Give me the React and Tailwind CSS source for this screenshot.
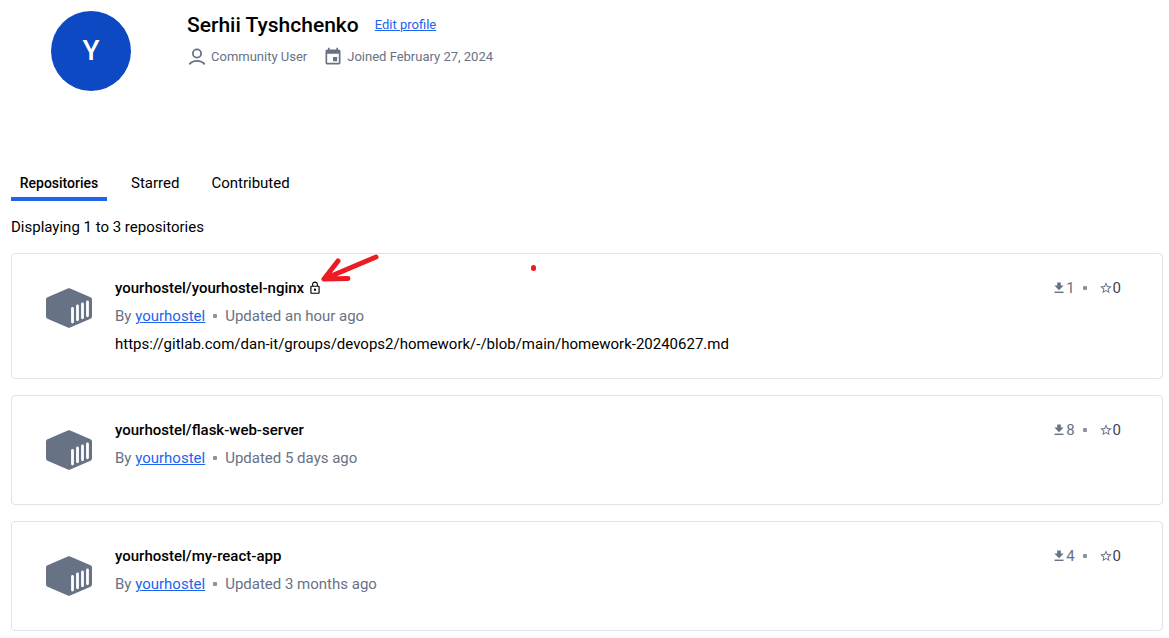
import { MdEvent, MdLockOutline, MdStarBorder } from 'react-icons/md';

const repositories = [
  {
    name: 'yourhostel/yourhostel-nginx',
    updated: 'Updated an hour ago',
    description: 'https://gitlab.com/dan-it/groups/devops2/homework/-/blob/main/homework-20240627.md',
    isPrivate: true,
    pulls: 1,
    stars: 0,
  },
  { name: 'yourhostel/flask-web-server', updated: 'Updated 5 days ago', pulls: 8, stars: 0 },
  { name: 'yourhostel/my-react-app', updated: 'Updated 3 months ago', pulls: 4, stars: 0 },
];

function PersonIcon() {
  return (
    <svg viewBox="0 0 20 20" className="size-5" fill="none" stroke="currentColor" strokeWidth="1.8" aria-hidden="true">
      <circle cx="10" cy="6.5" r="4.1" />
      <path d="M2.3 17.3C4.2 15.1 7 13.9 10 13.9s5.8 1.2 7.7 3.4" />
    </svg>
  );
}

function PullsIcon() {
  return (
    <svg viewBox="0 0 14 14" className="size-[14px]" fill="#677285" role="img" aria-label="Pulls">
      <path d="M5.200 1.500h3.600v3h2.800L7 9.300 2.400 4.500h2.800z" />
      <path d="M2.500 10.600h9v1.400h-9z" />
    </svg>
  );
}

function ContainerIcon() {
  return (
    <svg viewBox="0 0 46 40" className="h-10 w-[46px]" aria-hidden="true">
      <path
        d="M21.8.4a3 3 0 0 1 2.4 0L44.5 9.2A2.4 2.4 0 0 1 46 11.4V28.6a2.4 2.4 0 0 1-1.5 2.2L24.2 39.6a3 3 0 0 1-2.4 0L1.5 30.8A2.4 2.4 0 0 1 0 28.6V11.4A2.4 2.4 0 0 1 1.5 9.2Z"
        fill="#677285"
      />
      <path d="M26.5 20.3V34M31.5 18V31.8M36.5 16V29.8M41.5 14V27.8" stroke="#fff" strokeWidth="2.8" strokeLinecap="round" />
    </svg>
  );
}

function Arrow() {
  return (
    <svg
      viewBox="0 0 62 34"
      className="pointer-events-none absolute top-[-2px] left-[307px] h-[34px] w-[62px]"
      fill="none"
      stroke="#ed1c24"
      strokeWidth="5"
      strokeLinecap="round"
      strokeLinejoin="round"
      aria-hidden="true"
    >
      <path d="M57 5 5 27M19 9 5 27 29 26.500" />
    </svg>
  );
}

function Dot() {
  return <span className="size-1 rounded-[1px] bg-[#8993a5]" />;
}

function Repository({ repo }) {
  return (
    <li className="relative flex min-h-[110px] rounded border border-[#e1e2e6] py-5 pr-10 pl-[34px] leading-7">
      <div className="flex h-[68px] w-[69px] shrink-0 items-center">
        <ContainerIcon />
      </div>
      <div className="min-w-0 flex-1">
        <h2 className="flex items-center gap-1 font-medium">
          {repo.name}
          {repo.isPrivate && <MdLockOutline className="size-[14px]" aria-label="Private" />}
        </h2>
        <p className="flex items-center text-[#677285]">
          <span className="mr-2">
            By{' '}
            <a href="#yourhostel" className="text-[#1d63ed] underline">
              yourhostel
            </a>
          </span>
          <Dot />
          <span className="ml-2">{repo.updated}</span>
        </p>
        {repo.description && <p>{repo.description}</p>}
      </div>
      <div className="flex h-7 shrink-0 items-center pr-px text-[#677285]">
        <PullsIcon />
        <span className="mr-2">{repo.pulls}</span>
        <Dot />
        <MdStarBorder className="ml-3 size-[14px]" aria-label="Stars" />
        <span className="text-[#394453]">{repo.stars}</span>
      </div>
      {repo.isPrivate && (
        <>
          <Arrow />
          <span className="pointer-events-none absolute top-[11px] left-[519px] h-[6px] w-[5px] rounded-full bg-[#ed1c24]" />
        </>
      )}
    </li>
  );
}

export default function App() {
  return (
    <main className="bg-white pt-[11px] pr-[6px] pb-2 pl-[11px] font-['Roboto',sans-serif] text-[15px] leading-5 text-black">
      <header className="flex h-20 gap-14 pl-10">
        <div className="flex size-20 items-center justify-center rounded-full bg-[#0c49c2] text-[28px] font-medium text-white">
          Y
        </div>
        <div>
          <div className="flex h-7 items-center gap-4 leading-7">
            <h1 className="text-[21px] font-medium">Serhii Tyshchenko</h1>
            <a href="#edit" className="text-[13px] text-[#1d63ed] underline">
              Edit profile
            </a>
          </div>
          <div className="mt-2 flex items-center gap-4 text-[13px] text-[#677285]">
            <span className="flex items-center gap-1">
              <PersonIcon />
              Community User
            </span>
            <span className="flex items-center gap-1">
              <MdEvent className="size-5" aria-hidden="true" />
              Joined February 27, 2024
            </span>
          </div>
        </div>
      </header>

      <nav className="mt-[74px] flex gap-4">
        <button type="button" className="h-9 min-w-24 border-b-4 border-[#1d63ed] px-2 pt-1 text-[14px] font-medium">
          Repositories
        </button>
        <button type="button" className="h-9 border-b-4 border-transparent px-2 pt-1">
          Starred
        </button>
        <button type="button" className="h-9 border-b-4 border-transparent px-2 pt-1">
          Contributed
        </button>
      </nav>

      <p className="mt-4">Displaying 1 to 3 repositories</p>

      <ul className="mt-4 flex flex-col gap-4">
        {repositories.map((repo) => (
          <Repository key={repo.name} repo={repo} />
        ))}
      </ul>
    </main>
  );
}
